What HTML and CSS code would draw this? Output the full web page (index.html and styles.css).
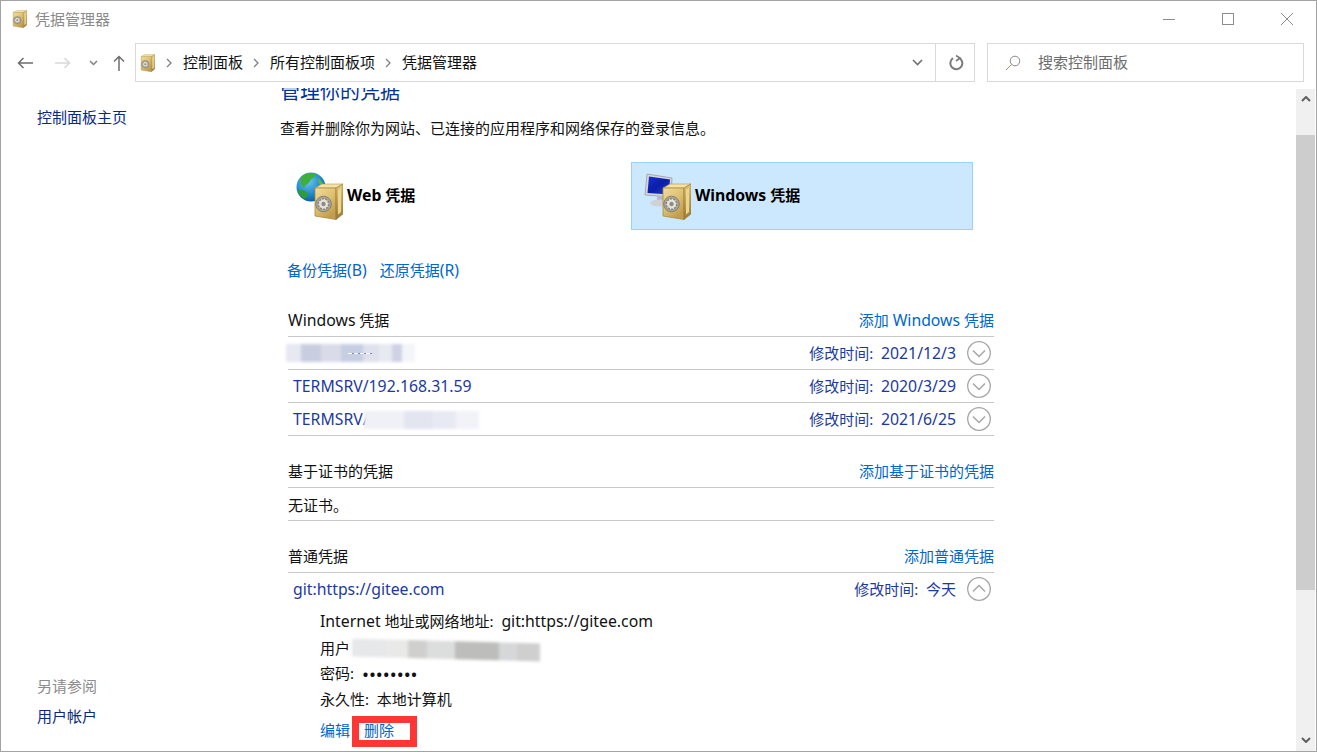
FILE: index.html
```html
<!DOCTYPE html>
<html lang="zh-CN">

<head>
    <meta charset="UTF-8">
    <title>凭据管理器</title>
    <link rel="stylesheet" href="styles.css">
</head>

<body>
    <svg class="defs" width="0" height="0">
        <defs>
            <linearGradient id="gold" x1="0" y1="0" x2="0.6" y2="1">
                <stop offset="0" stop-color="#f2dd9a" />
                <stop offset="0.55" stop-color="#dcbf70" />
                <stop offset="1" stop-color="#c09c4c" />
            </linearGradient>
            <linearGradient id="goldside" x1="0" y1="0" x2="0" y2="1">
                <stop offset="0" stop-color="#e2c679" />
                <stop offset="1" stop-color="#9a7a34" />
            </linearGradient>
            <radialGradient id="sea" cx="0.4" cy="0.3" r="0.8">
                <stop offset="0" stop-color="#6cc6ee" />
                <stop offset="0.6" stop-color="#1c86c8" />
                <stop offset="1" stop-color="#0c4c8c" />
            </radialGradient>
            <linearGradient id="screen" x1="0" y1="0" x2="1" y2="1">
                <stop offset="0" stop-color="#1a2fd0" />
                <stop offset="0.5" stop-color="#0a1ea8" />
                <stop offset="1" stop-color="#2c44c8" />
            </linearGradient>
            <symbol id="safe" viewBox="0 0 30 37">
                <path d="M2 5 L9 1 L30 1 L23 5 Z" fill="#f3e3a8" stroke="#b2964c" stroke-width="0.6" />
                <path d="M2 5 L23 5 L23 36.500 L2 33 Z" fill="url(#gold)" stroke="#a98a3d" stroke-width="0.8" />
                <path d="M23 5 L30 1 L30 31 L23 36.500 Z" fill="url(#goldside)" stroke="#94742f" stroke-width="0.6" />
                <path d="M25 7 L28 5 L28 29 L25 31.500 Z" fill="#ecd68e" />
                <circle cx="10.500" cy="21" r="7.800" fill="#a9a69a" stroke="#77746a" stroke-width="0.8" />
                <circle cx="10.500" cy="21" r="5.200" fill="#e6e4dc" stroke="#8b887c" stroke-width="1.500" stroke-dasharray="2 1.200" />
                <circle cx="10.500" cy="21" r="2.200" fill="#8f8c80" />
            </symbol>
            <symbol id="globe" viewBox="0 0 30 30">
                <circle cx="15" cy="15" r="14.500" fill="url(#sea)" />
                <path d="M6 4 C10 1 17 1 20 3 C19 6 15 6 14 9 C13 12 9 12 8 16 C5 14 3 9 6 4 Z" fill="#3fae3a" />
                <path d="M2 18 C6 17 10 19 12 22 C12 25 9 27 7 26 C4 24 3 21 2 18 Z" fill="#2f9c34" />
                <path d="M22 6 C25 8 28 12 28 15 C25 15 22 12 22 6 Z" fill="#54b848" />
            </symbol>
            <symbol id="monitor" viewBox="0 0 30 34">
                <path d="M3 1 L28 5 L27 24 L1 22 Z" fill="#d4d6da" stroke="#9a9ca4" stroke-width="0.8" />
                <path d="M5 3.500 L26 6.500 L25 21.500 L3.500 20 Z" fill="url(#screen)" />
                <path d="M13 23 L19 24 L19 28 L13 28 Z" fill="#b8bac0" />
                <ellipse cx="16" cy="30" rx="10" ry="3.500" fill="#cfd1d4" />
            </symbol>
            <symbol id="chev-down" viewBox="0 0 24 24">
                <circle cx="12" cy="12" r="11.300" fill="#fff" stroke="#a6a6a6" stroke-width="1.300" />
                <path d="M6 9.500 L12 15.500 L18 9.500" fill="none" stroke="#a6a6a6" stroke-width="1.500" />
            </symbol>
            <symbol id="chev-up" viewBox="0 0 24 24">
                <circle cx="12" cy="12" r="11.300" fill="#fff" stroke="#a6a6a6" stroke-width="1.300" />
                <path d="M6 14.500 L12 8.500 L18 14.500" fill="none" stroke="#a6a6a6" stroke-width="1.500" />
            </symbol>
        </defs>
    </svg>

    <div class="window">
        <header class="titlebar">
            <div class="title">
                <svg class="title-icon" width="15" height="18"><use href="#safe" /></svg>
                <span>凭据管理器</span>
            </div>
            <div class="winbtns">
                <svg width="14" height="14" viewBox="0 0 14 14"><path d="M1 7.500 H13" stroke="#8c8c8c" stroke-width="1" /></svg>
                <svg width="14" height="14" viewBox="0 0 14 14"><rect x="1.500" y="1.500" width="11" height="11" fill="none" stroke="#8c8c8c" stroke-width="1" /></svg>
                <svg width="14" height="14" viewBox="0 0 14 14"><path d="M1 1 L13 13 M13 1 L1 13" stroke="#8c8c8c" stroke-width="1" /></svg>
            </div>
        </header>

        <nav class="toolbar">
            <div class="navbtns">
                <svg class="nav-back" width="16" height="12" viewBox="0 0 16 12"><path d="M6.500 1 L1.500 6 L6.500 11 M1.500 6 H16" fill="none" stroke="#6e6e6e" stroke-width="1.500" /></svg>
                <svg class="nav-fwd" width="16" height="12" viewBox="0 0 16 12"><path d="M9.500 1 L14.500 6 L9.500 11 M14.500 6 H0" fill="none" stroke="#d9d9d9" stroke-width="1.500" /></svg>
                <svg class="nav-drop" width="9" height="6" viewBox="0 0 9 6"><path d="M1 1 L4.500 4.500 L8 1" fill="none" stroke="#808080" stroke-width="1.500" /></svg>
                <svg class="nav-up" width="12" height="16" viewBox="0 0 12 16"><path d="M1 6.500 L6 1.500 L11 6.500 M6 1.500 V16" fill="none" stroke="#6e6e6e" stroke-width="1.500" /></svg>
            </div>
            <div class="address">
                <svg class="addr-icon" width="15" height="18"><use href="#safe" /></svg>
                <svg class="crumb-sep" width="6" height="10" viewBox="0 0 6 10"><path d="M1 1 L5 5 L1 9" fill="none" stroke="#808080" stroke-width="1.300" /></svg>
                <span class="crumb">控制面板</span>
                <svg class="crumb-sep" width="6" height="10" viewBox="0 0 6 10"><path d="M1 1 L5 5 L1 9" fill="none" stroke="#808080" stroke-width="1.300" /></svg>
                <span class="crumb">所有控制面板项</span>
                <svg class="crumb-sep" width="6" height="10" viewBox="0 0 6 10"><path d="M1 1 L5 5 L1 9" fill="none" stroke="#808080" stroke-width="1.300" /></svg>
                <span class="crumb">凭据管理器</span>
                <svg class="addr-drop" width="11" height="7" viewBox="0 0 11 7"><path d="M1 1 L5.500 5.500 L10 1" fill="none" stroke="#707070" stroke-width="1.600" /></svg>
                <div class="refresh">
                    <svg width="15" height="16" viewBox="0 0 15 16"><path d="M9.500 2.600 A6 6 0 1 1 4 3.200" fill="none" stroke="#7a7a7a" stroke-width="2" /><path d="M3 0.500 L7 3 L3 6" fill="none" stroke="#7a7a7a" stroke-width="1.600" transform="translate(4 0)" /></svg>
                </div>
            </div>
            <div class="search">
                <svg width="16" height="16" viewBox="0 0 16 16"><circle cx="10" cy="6" r="4.800" fill="none" stroke="#8a8a8a" stroke-width="1" /><path d="M6.500 9.500 L1 15" stroke="#b08a60" stroke-width="1" /></svg>
                <span>搜索控制面板</span>
            </div>
        </nav>

        <div class="main">
            <aside class="sidebar">
                <a class="side-link">控制面板主页</a>
                <div class="side-bottom">
                    <div class="side-label">另请参阅</div>
                    <a class="side-link">用户帐户</a>
                </div>
            </aside>

            <main class="content">
                <h1 class="heading">管理你的凭据</h1>
                <p class="desc">查看并删除你为网站、已连接的应用程序和网络保存的登录信息。</p>

                <div class="cards">
                    <div class="card">
                        <svg class="card-icon" width="48" height="48">
                            <use href="#globe" x="1" y="0" width="30" height="30" />
                            <use href="#safe" x="18" y="11" width="30" height="37" />
                        </svg>
                        <span class="card-text"><span class="lat">Web</span> 凭据</span>
                    </div>
                    <div class="card selected">
                        <svg class="card-icon" width="48" height="48">
                            <use href="#monitor" x="1" y="1" width="30" height="34" />
                            <use href="#safe" x="18" y="11" width="30" height="37" />
                        </svg>
                        <span class="card-text"><span class="lat">Windows</span> 凭据</span>
                    </div>
                </div>

                <div class="actions">
                    <a class="link">备份凭据<span class="lat">(B)</span></a>
                    <a class="link">还原凭据<span class="lat">(R)</span></a>
                </div>

                <section class="section first">
                    <div class="sec-head">
                        <span><span class="lat">Windows</span> 凭据</span>
                        <a class="link">添加 <span class="lat">Windows</span> 凭据</a>
                    </div>
                    <div class="row">
                        <span class="smudge"><span class="blur blur-one"></span></span>
                        <span class="row-right"><span class="row-date">修改时间:&nbsp; <span class="lat">2021/12/3</span></span><svg width="24" height="24"><use href="#chev-down" /></svg></span>
                    </div>
                    <div class="row">
                        <span class="row-name"><span class="lat">TERMSRV/192.168.31.59</span></span>
                        <span class="row-right"><span class="row-date">修改时间:&nbsp; <span class="lat">2020/3/29</span></span><svg width="24" height="24"><use href="#chev-down" /></svg></span>
                    </div>
                    <div class="row">
                        <span class="row-name"><span class="lat">TERMSRV/</span><span class="blur blur-two"></span></span>
                        <span class="row-right"><span class="row-date">修改时间:&nbsp; <span class="lat">2021/6/25</span></span><svg width="24" height="24"><use href="#chev-down" /></svg></span>
                    </div>
                </section>

                <section class="section">
                    <div class="sec-head">
                        <span>基于证书的凭据</span>
                        <a class="link">添加基于证书的凭据</a>
                    </div>
                    <div class="empty">无证书。</div>
                </section>

                <section class="section">
                    <div class="sec-head">
                        <span>普通凭据</span>
                        <a class="link">添加普通凭据</a>
                    </div>
                    <div class="row open">
                        <span class="row-name"><span class="lat">git:https://gitee.com</span></span>
                        <span class="row-right"><span class="row-date">修改时间:&nbsp; 今天</span><svg width="24" height="24"><use href="#chev-up" /></svg></span>
                    </div>
                    <div class="details">
                        <div class="detail d1"><span class="lat">Internet</span> 地址或网络地址:&nbsp; <span class="lat">git:https://gitee.com</span></div>
                        <div class="detail d2">用户<span class="blur blur-three"></span></div>
                        <div class="detail d3">密码:&nbsp;<span class="dots">••••••••</span></div>
                        <div class="detail d4">永久性:&nbsp; 本地计算机</div>
                        <div class="detail-links">
                            <a class="link edit">编辑</a>
                            <span class="marked"><a class="link">删除</a></span>
                        </div>
                    </div>
                </section>
            </main>

            <div class="scrollbar">
                <svg class="sb-arrow" width="10" height="6" viewBox="0 0 10 6"><path d="M1 5 L5 1 L9 5" fill="none" stroke="#606060" stroke-width="2" /></svg>
                <div class="sb-thumb"></div>
                <svg class="sb-arrow bottom" width="10" height="6" viewBox="0 0 10 6"><path d="M1 1 L5 5 L9 1" fill="none" stroke="#606060" stroke-width="2" /></svg>
            </div>
        </div>
    </div>
</body>

</html>
```

FILE: styles.css
```css
body {
    margin: 0;
    font-family: "Noto Sans", "Noto Sans CJK SC", sans-serif;
    font-size: 15px;
    line-height: 20px;
    color: #111;
    background-color: #fff;
}

/* latin runs sit a bit larger next to the CJK glyphs */
.lat {
    font-size: 15.8px;
    line-height: 1;
}

.defs {
    display: block;
    height: 0;
}

.window {
    width: 1317px;
    height: 752px;
    box-sizing: border-box;
    border: 1px solid #a3a3a3;
    display: flex;
    flex-direction: column;
    overflow: hidden;
}

/* title bar */
.titlebar {
    height: 38px;
    box-sizing: border-box;
    padding-bottom: 2px;
    display: flex;
    align-items: center;
    justify-content: space-between;
    flex-shrink: 0;
}

.title {
    display: flex;
    align-items: center;
    padding-left: 11px;
    color: #8a8a8a;
}

.title-icon {
    margin-right: 8px;
}

.winbtns {
    display: flex;
    gap: 45px;
    padding-right: 22px;
}

/* address row */
.toolbar {
    height: 39px;
    margin-top: 4px;
    display: flex;
    flex-shrink: 0;
}

.navbtns {
    width: 134px;
    display: flex;
    align-items: center;
    padding-left: 16px;
    box-sizing: border-box;
}

.nav-fwd {
    margin-left: 22px;
}

.nav-drop {
    margin-left: 18px;
}

.nav-up {
    margin-left: 15px;
}

.address {
    width: 840px;
    box-sizing: border-box;
    border: 1px solid #d9d9d9;
    display: flex;
    align-items: center;
    padding-left: 4px;
}

.addr-icon {
    margin-right: 11px;
}

.crumb-sep {
    margin-right: 11px;
}

.crumb {
    margin-right: 10px;
    margin-bottom: 2px;
}

.addr-drop {
    margin-left: auto;
    margin-right: 12px;
}

.refresh {
    width: 39px;
    height: 100%;
    box-sizing: border-box;
    padding-left: 3px;
    border-left: 1px solid #d9d9d9;
    display: flex;
    align-items: center;
    justify-content: center;
}

.search {
    width: 317px;
    margin-left: 12px;
    box-sizing: border-box;
    border: 1px solid #d9d9d9;
    display: flex;
    align-items: center;
    padding-left: 17px;
    color: #6d6d6d;
}

.search span {
    margin-left: 17px;
    margin-bottom: 2px;
}

/* body */
.main {
    flex: 1;
    display: flex;
    min-height: 0;
    margin-top: 3px;
}

.sidebar {
    width: 279px;
    flex-shrink: 0;
    box-sizing: border-box;
    padding: 22px 0 0 36px;
    display: flex;
    flex-direction: column;
    justify-content: space-between;
}

.side-link {
    color: #0a2a80;
}

.side-label {
    color: #8c8c8c;
    margin-bottom: 10px;
}

.side-bottom {
    padding-bottom: 25px;
}

/* the page is scrolled, so the heading is cut by the top of this pane */
.content {
    width: 1016px;
    flex-shrink: 0;
    margin-top: 3px;
    overflow: hidden;
}

.heading {
    margin: -10px 0 0;
    font-size: 20px;
    line-height: 27px;
    font-weight: normal;
    color: #003399;
}

.desc {
    margin: 13px 0 0;
}

.cards {
    display: flex;
    gap: 6px;
    margin: 24px 0 0 3px;
}

.card {
    width: 342px;
    height: 68px;
    box-sizing: border-box;
    border: 1px solid transparent;
    padding-left: 11px;
    display: flex;
    align-items: center;
    gap: 4px;
    font-weight: bold;
    color: #000;
}

.card-text {
    margin-bottom: 2px;
}

.card.selected {
    background-color: #cce8ff;
    border-color: #99d1ff;
}

.link {
    color: #0066cc;
}

.actions {
    display: flex;
    gap: 13px;
    margin: 30px 0 0 7px;
}

.section {
    width: 706px;
    margin: 25px 0 0 8px;
}

.section.first {
    margin-top: 30px;
}

.sec-head {
    display: flex;
    justify-content: space-between;
    height: 26px;
    border-bottom: 1px solid #c8c8c8;
}

.row {
    height: 32px;
    border-bottom: 1px solid #c8c8c8;
    padding: 0 3px 0 5px;
    display: flex;
    align-items: center;
    justify-content: space-between;
    color: #1c3a9c;
}

.row.open {
    border-bottom: none;
}

.row-name {
    display: flex;
    align-items: center;
    padding-top: 2px;
}

.row-right {
    display: flex;
    align-items: center;
    gap: 11px;
}

.row-right svg {
    display: block;
}

.empty {
    height: 32px;
    line-height: 34px;
    border-bottom: 1px solid #c8c8c8;
}

/* smudged out parts of the screenshot */
.smudge {
    display: flex;
    position: relative;
}

.smudge::after {
    content: "";
    position: absolute;
    left: 55px;
    top: 9px;
    width: 24px;
    height: 1px;
    background: repeating-linear-gradient(90deg, #fff 0 4px, #7d86c0 4px 6px);
}

.blur {
    display: inline-block;
    height: 18px;
    filter: blur(1.5px);
}

.blur-one {
    width: 129px;
    margin-left: -7px;
    background: linear-gradient(90deg, #e6e8f2 0 12%, #c9cde0 12% 27%, #d9dbe8 27% 43%, #c5cee2 43% 60%, #dfe1ec 60% 72%, #e8eaf2 72% 82%, #cfd2e4 82% 90%, #f3f5fa 90%);
}

.blur-two {
    width: 115px;
    margin-left: -5px;
    background: linear-gradient(90deg, #f0f1f6 0 35%, #e3e5f0 35% 60%, #e8eaf3 60% 80%, #f2f3f8 80%);
}

.blur-three {
    width: 188px;
    vertical-align: middle;
    margin-left: 2px;
    transform: skewY(1.5deg);
    background: linear-gradient(90deg, #e6e8ea 0 18%, #e9e9e7 18% 30%, #cfcfcd 30% 40%, #dcdddd 40% 55%, #bdbdbb 55% 78%, #d6d7d9 78% 88%, #cfcfcf 88%);
}

.details {
    padding: 6px 0 0 32px;
}

.detail {
    height: 20px;
    color: #111;
}

.d2 {
    margin-top: 7px;
}

.d3 {
    margin-top: 5px;
}

.d4 {
    margin-top: 6px;
}

.dots {
    font-size: 18.5px;
    line-height: 1;
    margin-left: 4px;
    vertical-align: -2px;
}

.detail-links {
    display: flex;
    align-items: center;
    margin-top: 7px;
}

.edit {
    margin-bottom: 4px;
}

.marked {
    margin-left: 2px;
    padding: 0 16px 0 5px;
    height: 17px;
    line-height: 14px;
    border: 7px solid #ff3636;
}

/* scrollbar */
.scrollbar {
    width: 19px;
    flex-shrink: 0;
    background-color: #f0f0f0;
    position: relative;
    margin-top: 4px;
}

.sb-arrow {
    position: absolute;
    left: 5px;
    top: 7px;
}

.sb-arrow.bottom {
    top: auto;
    bottom: 8px;
}

.sb-thumb {
    position: absolute;
    left: 0;
    right: 0;
    top: 46px;
    height: 455px;
    background-color: #cdcdcd;
}
```
